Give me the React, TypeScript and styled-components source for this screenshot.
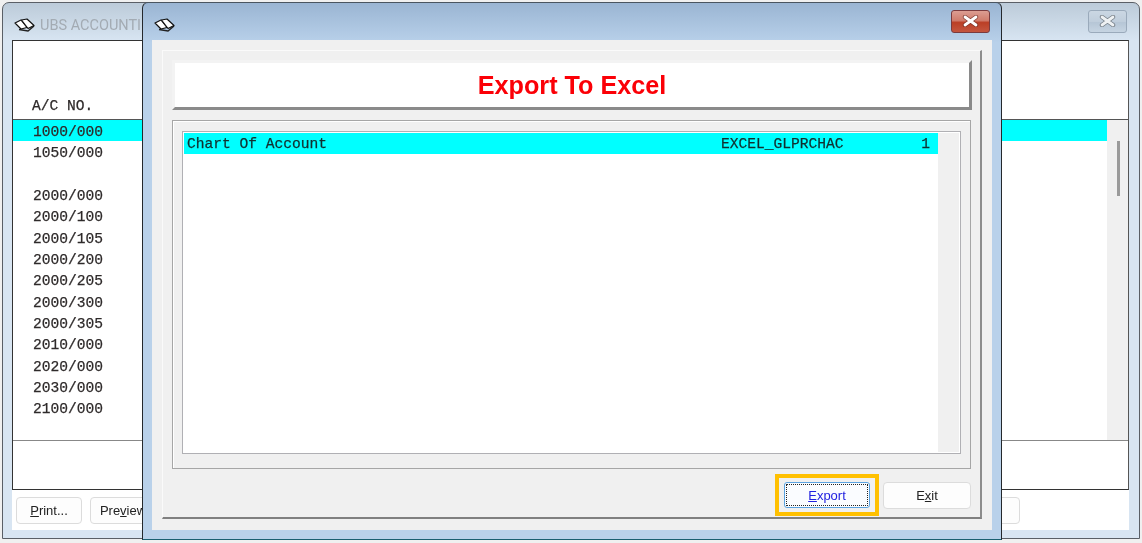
import React from "react";
import styled, { createGlobalStyle } from "styled-components";

const GlobalStyle = createGlobalStyle`
  html, body {
    margin: 0;
    padding: 0;
    background: #f0f0f0;
  }
`;

const mono = `"Liberation Mono", monospace`;
const ui = `"Liberation Sans", Arial, sans-serif`;

const Desktop = styled.div`
  position: relative;
  width: 1142px;
  height: 543px;
  padding: 2px;
  box-sizing: border-box;
  overflow: hidden;
  background: #f0f0f0;
  filter: blur(0.35px);
`;

const BackWindow = styled.div`
  display: flex;
  flex-direction: column;
  width: 1138px;
  height: 537px;
  box-sizing: border-box;
  padding: 0 10px 8px 9px;
  border: 1px solid #5a5f66;
  border-radius: 7px 7px 0 0;
  background: linear-gradient(#bccbd9 0, #d8e5f2 38px);
`;

const TitleBar = styled.div`
  display: flex;
  align-items: center;
  height: 37px;
  flex-shrink: 0;
  gap: 5px;
  padding: 6px 2px 0 2px;
  box-sizing: border-box;
`;

const BackTitle = styled.span`
  flex: 1;
  padding-top: 1px;
  font: 14.5px Roboto, sans-serif;
  color: #a3abb3;
  white-space: nowrap;
`;

const CloseBox = styled.div<{ $active?: boolean }>`
  display: flex;
  align-items: center;
  justify-content: center;
  width: 39px;
  height: 23px;
  box-sizing: border-box;
  border-radius: 3px;
  margin-top: -7px;
  border: 1px solid ${(p) => (p.$active ? "#7a3b3e" : "#9aaabb")};
  background: ${(p) =>
    p.$active
      ? "linear-gradient(#dc9d92 0, #d07c6c 45%, #bb3f26 55%, #c4563f 100%)"
      : "linear-gradient(#cbd7e3 0, #c0cedc 50%, #b6c6d6 55%, #c6d4e2 100%)"};
`;

const BackClient = styled.div`
  flex: 1;
  display: flex;
  flex-direction: column;
  background: #fff;
`;

const Grid = styled.div`
  display: flex;
  flex-direction: column;
  height: 450px;
  flex-shrink: 0;
  box-sizing: border-box;
  border: 1px solid #333;
  border-right-color: #555;
`;

const GridHead = styled.div`
  display: flex;
  align-items: flex-end;
  height: 79px;
  flex-shrink: 0;
  box-sizing: border-box;
  padding: 0 0 5px 19px;
  border-bottom: 1px solid #555;
  font: 14.6px ${mono};
  color: #2e2a2a;
  -webkit-text-stroke: 0.25px #2e2a2a;
`;

const GridBody = styled.div`
  flex: 1;
  display: flex;
  min-height: 0;
`;

const Rows = styled.div`
  flex: 1;
  min-width: 0;
`;

const AccountRow = styled.div<{ $selected?: boolean }>`
  height: 21.33px;
  box-sizing: border-box;
  padding: 2px 0 0 20px;
  font: 14.6px/21.33px ${mono};
  color: #2e2a2a;
  -webkit-text-stroke: 0.25px #2e2a2a;
  background: ${(p) => (p.$selected ? "#00ffff" : "transparent")};
`;

const ScrollTrack = styled.div`
  width: 21px;
  flex-shrink: 0;
  display: flex;
  justify-content: center;
  padding-top: 21px;
  background: #f0f0f0;
`;

const ScrollThumb = styled.div`
  width: 3px;
  height: 55px;
  background: #9a9a9a;
  margin-left: 1px;
`;

const GridFoot = styled.div`
  height: 48px;
  flex-shrink: 0;
  border-top: 1px solid #888;
`;

const ButtonBar = styled.div`
  display: flex;
  gap: 8px;
  padding: 7px 109px 0 4px;
`;

const FormButton = styled.button<{ $push?: boolean }>`
  width: 66px;
  height: 27px;
  box-sizing: border-box;
  padding: 0;
  margin-left: ${(p) => (p.$push ? "auto" : "0")};
  border: 1px solid #dcdcdc;
  border-radius: 4px;
  background: #fdfdfd;
  font: 13px ${ui};
  color: #222;
`;

const Dialog = styled.div`
  position: absolute;
  left: 142px;
  top: 2px;
  width: 860px;
  height: 538px;
  display: flex;
  flex-direction: column;
  box-sizing: border-box;
  padding: 0 9px 9px 9px;
  border: 1px solid #24282c;
  border-top-color: #4a5560;
  border-bottom: 1px solid #1a5f70;
  border-radius: 6px 6px 0 0;
  background: linear-gradient(#9ab5d3 0, #b9d1ea 40px);
`;

const DialogClient = styled.div`
  flex: 1;
  min-height: 0;
  padding: 10px 10px 11px;
  background: #f0f0f0;
`;

const Panel = styled.div`
  height: 100%;
  box-sizing: border-box;
  display: flex;
  flex-direction: column;
  padding: 9px 9px 0;
  border: 1px solid #fafafa;
  border-right: 2px solid #8c8c8c;
  border-bottom: 2px solid #808080;
`;

const Banner = styled.div`
  height: 50px;
  flex-shrink: 0;
  box-sizing: border-box;
  display: flex;
  align-items: center;
  justify-content: center;
  margin-right: -1px;
  padding-top: 1px;
  background: #fff;
  border: 3px solid #f3f3f3;
  border-right-color: #8a8a8a;
  border-bottom-color: #8a8a8a;
  font: bold 25.2px "Liberation Sans", Arial, sans-serif;
  color: #fb0007;
`;

const GroupBox = styled.div`
  height: 349px;
  margin-top: 10px;
  flex-shrink: 0;
  box-sizing: border-box;
  padding: 10px 9px 14px 9px;
  border: 1px solid #a6a6a6;
  box-shadow: inset 1px 1px 0 #fff;
`;

const ListFrame = styled.div`
  height: 100%;
  display: flex;
  box-sizing: border-box;
  padding: 1px;
  border: 1px solid #b0b0b4;
  background: #fff;
`;

const ListRows = styled.div`
  flex: 1;
  min-width: 0;
`;

const ExportRow = styled.div`
  display: grid;
  grid-template-columns: 534px 1fr auto;
  height: 21px;
  align-items: center;
  box-sizing: border-box;
  padding: 1px 8px 0 3px;
  background: #00ffff;
  font: 14.6px ${mono};
  color: #123030;
  -webkit-text-stroke: 0.25px #123030;
`;

const ListScroll = styled.div`
  width: 21px;
  flex-shrink: 0;
  background: #f0f0f0;
`;

const ActionBar = styled.div`
  flex: 1;
  display: flex;
  justify-content: flex-end;
  align-items: flex-start;
  gap: 4px;
  padding: 5px 0 0 0;
`;

const Highlight = styled.div`
  display: flex;
  padding: 4px 5px;
  border: 4px solid #ffc000;
`;

const DefaultButton = styled.button`
  width: 86px;
  height: 26px;
  box-sizing: border-box;
  padding: 0;
  border: 1px solid #5aa2e0;
  border-radius: 3px;
  outline: 1px dotted #222;
  outline-offset: -3px;
  background: #fafcff;
  font: 13px ${ui};
  color: #2222e0;
`;

const ExitButton = styled.button`
  width: 88px;
  height: 27px;
  margin-top: 8px;
  box-sizing: border-box;
  padding: 0;
  border: 1px solid #dcdcdc;
  border-radius: 4px;
  background: #fdfdfd;
  font: 13px ${ui};
  color: #222;
`;

const BookIcon = () => (
  <svg width="21" height="14" viewBox="0 0 21 14" style={{ flexShrink: 0 }}>
    <path d="M5 11.5 14 13 20 8" fill="none" stroke="#222" strokeWidth="1.5" />
    <path d="M1 5 7 2 13 9.5 7 11Z" fill="#fff" stroke="#111" strokeWidth="1.2" strokeLinejoin="round" />
    <path d="M7.5 2 13 1 20 7.5 14 10.5Z" fill="#fff" stroke="#111" strokeWidth="1.2" strokeLinejoin="round" />
  </svg>
);

const CloseGlyph = ({ active }: { active?: boolean }) => (
  <svg width="17" height="12" viewBox="0 0 17 12">
    <path
      d="M3 2 14 10M14 2 3 10"
      fill="none"
      stroke={active ? "#6b2a22" : "#5a6067"}
      strokeWidth="4.4"
      strokeLinecap="round"
      opacity="0.75"
    />
    <path
      d="M3 2 14 10M14 2 3 10"
      fill="none"
      stroke={active ? "#fff" : "#eef1f3"}
      strokeWidth="2.8"
      strokeLinecap="round"
    />
  </svg>
);

const accounts = [
  "1000/000",
  "1050/000",
  "",
  "2000/000",
  "2000/100",
  "2000/105",
  "2000/200",
  "2000/205",
  "2000/300",
  "2000/305",
  "2010/000",
  "2020/000",
  "2030/000",
  "2100/000",
];

export default function App() {
  return (
    <>
      <GlobalStyle />
      <Desktop>
        <BackWindow>
          <TitleBar>
            <BookIcon />
            <BackTitle>UBS ACCOUNTING</BackTitle>
            <CloseBox>
              <CloseGlyph />
            </CloseBox>
          </TitleBar>
          <BackClient>
            <Grid>
              <GridHead>A/C NO.</GridHead>
              <GridBody>
                <Rows>
                  {accounts.map((a, i) => (
                    <AccountRow key={i} $selected={i === 0}>
                      {a}
                    </AccountRow>
                  ))}
                </Rows>
                <ScrollTrack>
                  <ScrollThumb />
                </ScrollTrack>
              </GridBody>
              <GridFoot />
            </Grid>
            <ButtonBar>
              <FormButton>
                <u>P</u>rint...
              </FormButton>
              <FormButton>
                Pre<u>v</u>iew
              </FormButton>
              <FormButton $push />
            </ButtonBar>
          </BackClient>
        </BackWindow>

        <Dialog>
          <TitleBar>
            <BookIcon />
            <BackTitle />
            <CloseBox $active>
              <CloseGlyph active />
            </CloseBox>
          </TitleBar>
          <DialogClient>
            <Panel>
              <Banner>Export To Excel</Banner>
              <GroupBox>
                <ListFrame>
                  <ListRows>
                    <ExportRow>
                      <span>Chart Of Account</span>
                      <span>EXCEL_GLPRCHAC</span>
                      <span>1</span>
                    </ExportRow>
                  </ListRows>
                  <ListScroll />
                </ListFrame>
              </GroupBox>
              <ActionBar>
                <Highlight>
                  <DefaultButton>
                    <u>E</u>xport
                  </DefaultButton>
                </Highlight>
                <ExitButton>
                  E<u>x</u>it
                </ExitButton>
              </ActionBar>
            </Panel>
          </DialogClient>
        </Dialog>
      </Desktop>
    </>
  );
}
